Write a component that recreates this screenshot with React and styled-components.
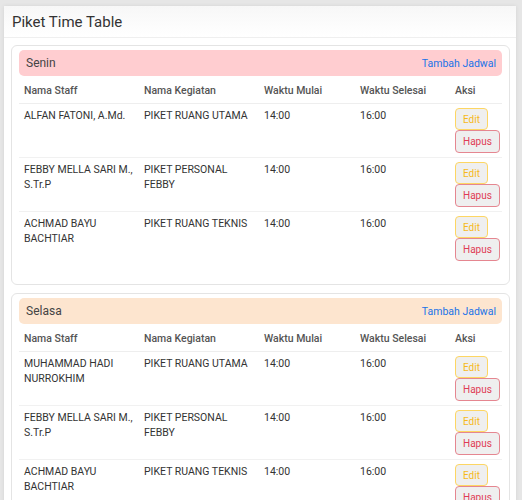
import React from "react";
import styled, { createGlobalStyle } from "styled-components";

const GlobalStyle = createGlobalStyle`
  body {
    margin: 0;
    background: #e6e6e6;
    font-family: Roboto, "Liberation Sans", sans-serif;
    color: #333;
  }
`;

const Page = styled.div`
  padding: 6px 6px 0 4px;
`;

const Card = styled.div`
  background: #fff;
  box-shadow: 0 0 4px rgba(0, 0, 0, 0.08);
`;

const CardHeader = styled.div`
  height: 31px;
  display: flex;
  align-items: center;
  padding: 0 8px;
  border-bottom: 1px solid #efefef;
  background: linear-gradient(#f7f7f7, #fff);
`;

const Title = styled.h1`
  margin: 0;
  font-size: 15px;
  font-weight: 400;
  color: #333;
`;

const CardBody = styled.div`
  padding: 7px 6px 0 7px;
`;

const DayCard = styled.div`
  border: 1px solid #e4e4e4;
  border-radius: 6px;
  padding: 4px 7px 5px;
  margin-bottom: 8px;
`;

const DayBar = styled.div`
  height: 26px;
  display: flex;
  align-items: center;
  justify-content: space-between;
  padding: 0 6px 0 7px;
  border-radius: 5px;
  background: ${(p) => p.$bg};
  font-size: 12px;
  color: #444;
`;

const AddLink = styled.a`
  color: #1a73e8;
  font-size: 10.5px;
  text-decoration: none;
  cursor: pointer;
`;

const Table = styled.table`
  width: 100%;
  border-collapse: collapse;
  table-layout: fixed;
  margin-top: 2px;
  margin-bottom: 14px;
  font-size: 10.5px;
`;

const Th = styled.th`
  text-align: left;
  font-weight: 500;
  color: #555;
  height: 25px;
  padding: 0 5px;
  border-bottom: 1px solid #eee;
`;

const Td = styled.td`
  vertical-align: top;
  padding: 4px 5px;
  line-height: 15px;
  color: #333;
`;

const Row = styled.tr`
  border-bottom: 1px solid #f1f1f1;
  &:last-child {
    border-bottom: none;
  }
`;

const ActionButton = styled.button`
  display: block;
  height: ${(p) => (p.$danger ? "23px" : "22px")};
  padding: 0 7px;
  border-radius: 4px;
  background: #efefef;
  border: 1px solid ${(p) => (p.$danger ? "#e58690" : "#fdd663")};
  color: ${(p) => (p.$danger ? "#e03c55" : "#f6b91a")};
  font-family: inherit;
  font-size: 10px;
  cursor: pointer;
`;

const rows = [
  { staff: "ALFAN FATONI, A.Md.", kegiatan: "PIKET RUANG UTAMA" },
  { staff: "FEBBY MELLA SARI M., S.Tr.P", kegiatan: "PIKET PERSONAL FEBBY" },
  { staff: "ACHMAD BAYU BACHTIAR", kegiatan: "PIKET RUANG TEKNIS" },
];

const days = [
  {
    name: "Senin",
    bg: "#ffcdd0",
    rows,
  },
  {
    name: "Selasa",
    bg: "#fde5cf",
    rows: [
      { staff: "MUHAMMAD HADI NURROKHIM", kegiatan: "PIKET RUANG UTAMA" },
      rows[1],
      rows[2],
    ],
  },
];

const DaySchedule = ({ day }) => (
  <DayCard>
    <DayBar $bg={day.bg}>
      <span>{day.name}</span>
      <AddLink>Tambah Jadwal</AddLink>
    </DayBar>
    <Table>
      <colgroup>
        <col style={{ width: 120 }} />
        <col style={{ width: 120 }} />
        <col style={{ width: 96 }} />
        <col style={{ width: 95 }} />
        <col />
      </colgroup>
      <thead>
        <tr>
          <Th>Nama Staff</Th>
          <Th>Nama Kegiatan</Th>
          <Th>Waktu Mulai</Th>
          <Th>Waktu Selesai</Th>
          <Th>Aksi</Th>
        </tr>
      </thead>
      <tbody>
        {day.rows.map((r, i) => (
          <Row key={i}>
            <Td>{r.staff}</Td>
            <Td>{r.kegiatan}</Td>
            <Td>14:00</Td>
            <Td>16:00</Td>
            <Td>
              <ActionButton>Edit</ActionButton>
              <ActionButton $danger>Hapus</ActionButton>
            </Td>
          </Row>
        ))}
      </tbody>
    </Table>
  </DayCard>
);

const App = () => (
  <>
    <GlobalStyle />
    <Page>
      <Card>
        <CardHeader>
          <Title>Piket Time Table</Title>
        </CardHeader>
        <CardBody>
          {days.map((d) => (
            <DaySchedule key={d.name} day={d} />
          ))}
        </CardBody>
      </Card>
    </Page>
  </>
);

export default App;
